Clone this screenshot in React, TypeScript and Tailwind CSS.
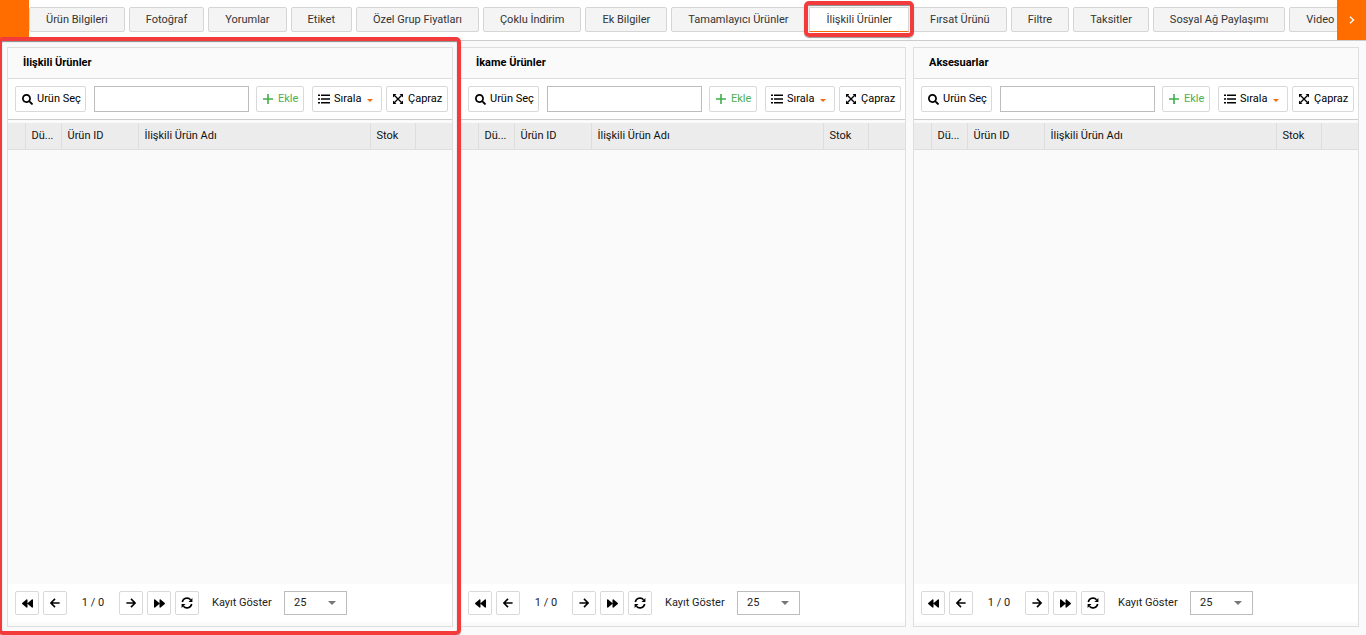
import { useState } from 'react';
import { FaSearch, FaBackward, FaForward } from 'react-icons/fa';

const tabs = [
  'Ürün Bilgileri',
  'Fotoğraf',
  'Yorumlar',
  'Etiket',
  'Özel Grup Fiyatları',
  'Çoklu İndirim',
  'Ek Bilgiler',
  'Tamamlayıcı Ürünler',
  'İlişkili Ürünler',
  'Fırsat Ürünü',
  'Filtre',
  'Taksitler',
  'Sosyal Ağ Paylaşımı',
  'Video',
];

const panels = [
  { id: 'related', title: 'İlişkili Ürünler', highlighted: true },
  { id: 'substitute', title: 'İkame Ürünler', highlighted: false },
  { id: 'accessory', title: 'Aksesuarlar', highlighted: false },
];

const toolButton =
  'flex h-[26px] shrink-0 items-center whitespace-nowrap rounded-[2px] border border-[#d9d9d9] bg-white text-black';
const pageButton =
  'flex h-6 w-6 items-center justify-center rounded-[2px] border border-[#d9d9d9] bg-white text-black';

function ArrowIcon({ flip = false }: { flip?: boolean }) {
  return (
    <svg
      viewBox="0 0 12 12"
      className={flip ? 'h-3 w-3 rotate-180' : 'h-3 w-3'}
      fill="none"
      stroke="currentColor"
      strokeWidth="1.6"
    >
      <path d="M10.6 6H2M6 1.9L1.9 6L6 10.1" />
    </svg>
  );
}

function RefreshIcon() {
  return (
    <svg viewBox="0 0 12 12" className="h-3 w-3" fill="none" stroke="currentColor" strokeWidth="1.6">
      <path d="M1.3 5A4.8 4.8 0 0 1 9.6 2.8M10.7 7A4.8 4.8 0 0 1 2.4 9.2" />
      <path d="M11.4 1V4.9H7.5ZM0.6 11V7.1H4.5Z" fill="currentColor" stroke="none" />
    </svg>
  );
}

function PlusIcon() {
  return (
    <svg viewBox="0 0 12 12" className="h-3 w-3" fill="none" stroke="currentColor" strokeWidth="1.6">
      <path d="M6 1V11M1 6H11" />
    </svg>
  );
}

function ListIcon() {
  return (
    <svg viewBox="0 0 12 12" className="h-3 w-3" fill="currentColor">
      <path d="M0 1.4H2V3H0ZM0 5.2H2V6.8H0ZM0 9H2V10.6H0Z" />
      <path d="M3 1.4H12V3H3ZM3 5.2H12V6.8H3ZM3 9H12V10.6H3Z" />
    </svg>
  );
}

function CrossIcon() {
  return (
    <svg viewBox="0 0 12 12" className="h-3 w-3" fill="currentColor">
      <path d="M2.5 2.5L9.5 9.5M9.5 2.5L2.5 9.5" stroke="currentColor" strokeWidth="1.4" />
      <path d="M1 1H4.4L1 4.4ZM11 1V4.4L7.6 1ZM1 11V7.6L4.4 11ZM11 11H7.6L11 7.6Z" />
    </svg>
  );
}

function Frame({ className }: { className: string }) {
  return (
    <div
      className={`pointer-events-none absolute z-10 rounded-[5px] border-4 border-[#f43b3b] shadow-[inset_0_1px_1px_#888,0_1px_1px_#999] ${className}`}
    />
  );
}

function ProductPanel({ id, title, highlighted }: { id: string; title: string; highlighted: boolean }) {
  const [query, setQuery] = useState('');
  const [pageSize, setPageSize] = useState('25');

  return (
    <section className="relative flex min-w-0 flex-1 flex-col border border-[#dedede] bg-[#fafafa]">
      <h2 className="flex h-[31px] items-center border-b border-[#dedede] px-[15px] pb-px font-bold text-black">
        {title}
      </h2>

      <div className="flex h-[41px] items-center border-b border-[#ccc] bg-white pr-1 pl-[7px]">
        <button type="button" className={`${toolButton} w-[71px] gap-1 pl-[6px]`}>
          <FaSearch className="h-[11px] w-[11px]" />
          Urün Seç
        </button>
        <input
          type="text"
          aria-label={`${title} ara`}
          value={query}
          onChange={(e) => setQuery(e.target.value)}
          className="mr-[7px] ml-2 h-[26px] min-w-0 flex-1 border border-[#bdbdbd] bg-white px-2 outline-none"
        />
        <button type="button" className={`${toolButton} w-12 gap-1 pl-[5px]`}>
          <span className="text-[#3fae4a]">
            <PlusIcon />
          </span>
          <span className="text-[#4caf50]">Ekle</span>
        </button>
        <button type="button" className={`${toolButton} ml-2 w-[70px] gap-1 pl-[5px]`}>
          <ListIcon />
          Sırala
          <svg viewBox="0 0 6 3" className="mt-[2px] ml-[2px] h-[3px] w-[6px] fill-[#f26c0d]">
            <path d="M0 0H6L3 3Z" />
          </svg>
        </button>
        <button type="button" className={`${toolButton} ml-1 w-[62px] gap-1 pl-[5px]`}>
          <CrossIcon />
          Çapraz
        </button>
      </div>

      <div className="flex-1 pt-[3px]">
        <table className="w-full table-fixed border-collapse text-left text-[#111]">
          <thead>
            <tr className="h-[26px] border-b border-[#dedede] bg-[#ececec]">
              <th className="w-[17px] border-r border-[#dedede]" />
              <th className="w-9 border-r border-[#dedede] pl-[6px] font-normal">Dü...</th>
              <th className="w-[77px] border-r border-[#dedede] pl-[6px] font-normal">Ürün ID</th>
              <th className="border-r border-[#dedede] pl-[6px] font-normal">İlişkili Ürün Adı</th>
              <th className="w-[45px] border-r border-[#dedede] pl-[6px] font-normal">Stok</th>
              <th className="w-[37px]" />
            </tr>
          </thead>
          <tbody />
        </table>
      </div>

      <div className="mb-1 flex h-[38px] items-center bg-white pl-[7px] text-[#222]">
        <div className="flex gap-1">
          <button type="button" aria-label="İlk sayfa" className={pageButton}>
            <FaBackward className="h-[11px] w-[11px]" />
          </button>
          <button type="button" aria-label="Önceki sayfa" className={pageButton}>
            <ArrowIcon />
          </button>
        </div>
        <span className="w-[52px] text-center">1 / 0</span>
        <div className="flex gap-1">
          <button type="button" aria-label="Sonraki sayfa" className={pageButton}>
            <ArrowIcon flip />
          </button>
          <button type="button" aria-label="Son sayfa" className={pageButton}>
            <FaForward className="h-[11px] w-[11px]" />
          </button>
          <button type="button" aria-label="Yenile" className={pageButton}>
            <RefreshIcon />
          </button>
        </div>
        <label htmlFor={`${id}-size`} className="ml-[13px] w-[72px]">
          Kayıt Göster
        </label>
        <div className="relative">
          <select
            id={`${id}-size`}
            value={pageSize}
            onChange={(e) => setPageSize(e.target.value)}
            className="block h-6 w-[63px] appearance-none border border-[#bdbdbd] bg-white pl-[9px] outline-none"
          >
            <option value="25">25</option>
            <option value="50">50</option>
            <option value="100">100</option>
          </select>
          <svg viewBox="0 0 8 4" className="pointer-events-none absolute top-[10px] right-[11px] h-1 w-2 fill-[#777]">
            <path d="M0 0H8L4 4Z" />
          </svg>
        </div>
      </div>

      {highlighted && <Frame className="-top-[11px] -right-[9px] -bottom-[9px] -left-[10px]" />}
    </section>
  );
}

function App() {
  const [activeTab, setActiveTab] = useState('İlişkili Ürünler');

  return (
    <div className="flex min-h-screen flex-col overflow-hidden bg-[#fafafa] font-[Roboto,sans-serif] text-[11px] leading-4">
      <nav className="flex h-[41px] border-b border-[#ccc] bg-white">
        <button type="button" aria-label="Geri" className="w-[29px] shrink-0 bg-[#ff6c00]" />
        <div className="flex min-w-0 flex-1 gap-1 overflow-x-clip pt-[7px]">
          {tabs.map((tab) => (
            <div key={tab} className="relative h-[25px] shrink-0">
              <button
                type="button"
                onClick={() => setActiveTab(tab)}
                className={
                  tab === activeTab
                    ? 'h-[25px] border border-b-[#f26c0d] border-[#d5d5d5] bg-white px-4 text-[#333]'
                    : 'h-[25px] rounded-[2px] border border-[#d5d5d5] bg-[#f4f4f4] px-4 text-[#333]'
                }
              >
                {tab}
              </button>
              {tab === activeTab && <Frame className="-top-[6px] -right-[5px] -bottom-[5px] -left-[5px]" />}
            </div>
          ))}
        </div>
        <button
          type="button"
          aria-label="İleri"
          className="flex w-[29px] shrink-0 items-center justify-center bg-[#ff6c00] text-white"
        >
          <svg viewBox="0 0 6 8" className="h-2 w-[6px]" fill="none" stroke="currentColor" strokeWidth="1.4">
            <path d="M1 0.8L4.5 4L1 7.2" />
          </svg>
        </button>
      </nav>

      <main className="flex flex-1 gap-[7px] px-[7px] pt-[6px] pb-2">
        {panels.map((panel) => (
          <ProductPanel key={panel.id} {...panel} />
        ))}
      </main>
    </div>
  );
}

export default App;
